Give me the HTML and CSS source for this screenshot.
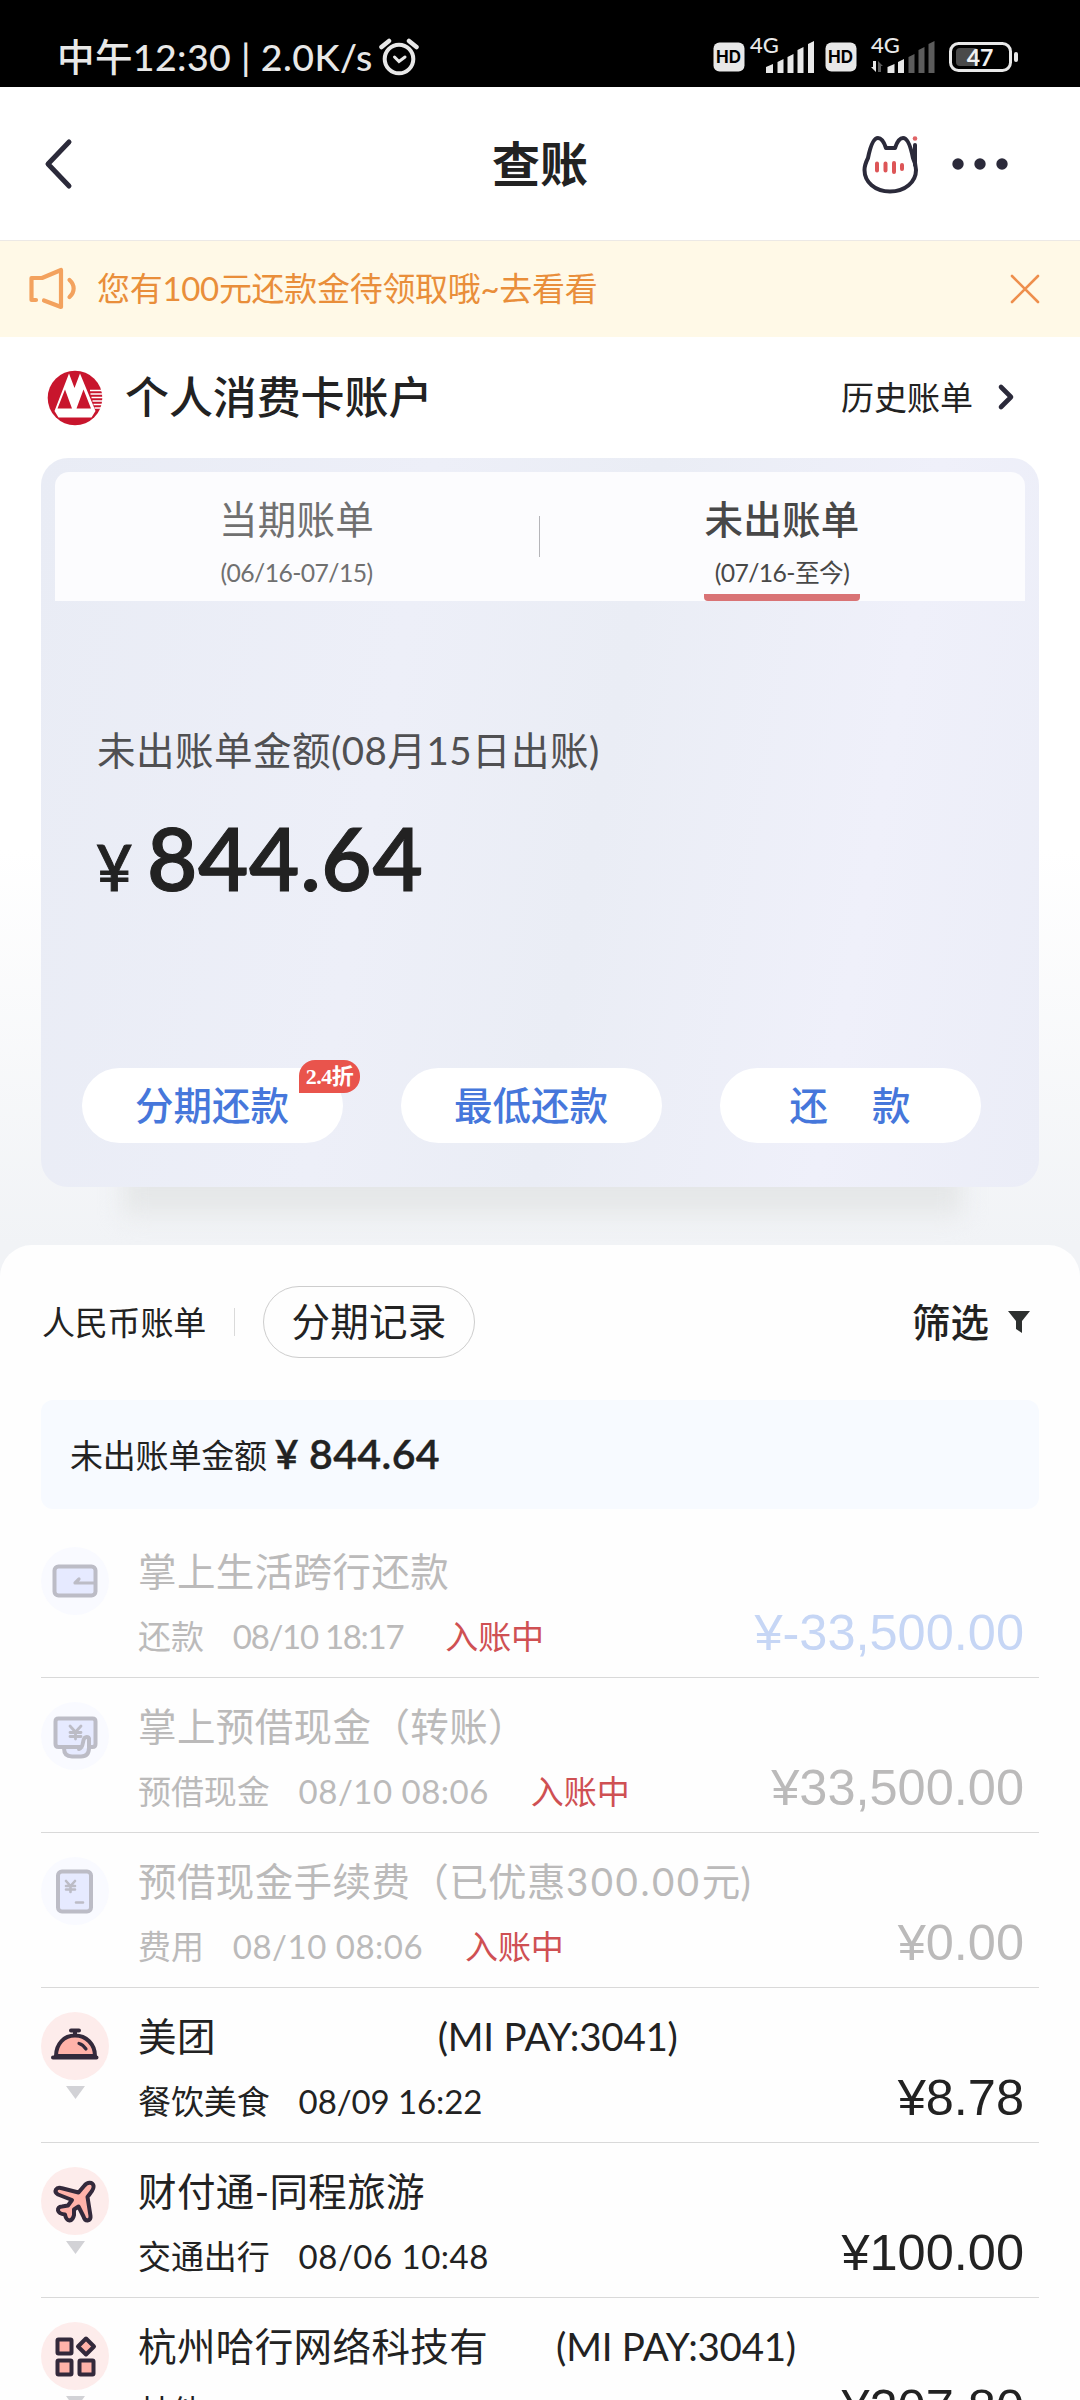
FILE: index.html
```
<!DOCTYPE html>
<html lang="zh-CN">
<head>
<meta charset="utf-8">
<title>查账</title>
<link rel="stylesheet" href="styles.css">
</head>
<body>
<div class="screen">
  <header class="status">
    <div class="status-left"><span class="clock">中午12:30 | 2.0K/s</span>
      <svg class="alarm" width="40" height="38" viewBox="0 0 40 38" fill="none" stroke="#e8e8e8" stroke-linecap="round"><circle cx="20" cy="21" r="14.3" stroke-width="4"/><path d="M2.5 9 10 3M37.500 9 30 3" stroke-width="4.500"/><path d="m15.500 19 4.500 4.500L26 19" stroke-width="3"/></svg>
    </div>
    <svg class="status-right" width="310" height="60" viewBox="712 26 310 60">
      <g fill="#e8e8e8">
        <rect x="713.500" y="42.500" width="31" height="29" rx="6"/><rect x="825.500" y="42.500" width="31" height="29" rx="6"/>
        <path d="M766 67l7-3v9h-7zM777.500 62l6-3v14h-6zM787.500 57l6-3v19h-6zM797.500 50l6-3v26h-6zM808 44l6-3v32h-6z"/>
        <path d="M887.500 67l7-3v9h-7zM898 62l6-3v14h-6zM873 61h3v11l-5-5h2z"/>
      </g>
      <path fill="#5c5c5c" d="M908.500 57l6-3v19h-6zM918.500 50l6-3v26h-6zM928.500 44l6-3v32h-6zM878 61l5 5h-2v6h-3z"/>
      <g class="sb-hd"><text x="716" y="63">HD</text><text x="828" y="63">HD</text></g>
      <g class="sb-net"><text x="750" y="53">4G</text><text x="871" y="53">4G</text></g>
      <rect x="950.500" y="43.500" width="60" height="27" rx="8" fill="none" stroke="#e8e8e8" stroke-width="3"/>
      <rect x="956" y="48" width="22" height="18" rx="4" fill="#4a4a4a"/>
      <rect x="1014" y="52" width="4" height="10" rx="2" fill="#e8e8e8"/>
      <text class="sb-bat" x="980" y="66">47</text>
    </svg>
  </header>

  <nav class="nav">
    <svg class="back" width="32" height="54" viewBox="0 0 32 54" fill="none" stroke="#2b2a3a" stroke-width="5" stroke-linecap="round" stroke-linejoin="round"><path d="M26 5 5 27l21 22"/></svg>
    <h1>查账</h1>
    <div class="nav-actions">
      <svg width="60" height="62" viewBox="862 134 60 62" fill="none" stroke-linecap="round" stroke-linejoin="round">
        <path stroke="#2b2a3a" stroke-width="4" d="M869 159c2-10 5-20 10-20 4 0 6 4 8 10h9c2-6 4-10 8-10 5 0 8 10 10 20 2 4 3 8 3 12 0 12-11 21.500-26 21.500S865.500 183 865.500 171c0-4 1.500-8 3.500-12z"/>
        <path stroke="#2b2a3a" stroke-width="4" d="M916 146v20"/><circle cx="916" cy="139.500" r="2.300" fill="#e06466"/>
        <path stroke="#dd5557" stroke-width="4" d="M878 164.500v7M886.500 164.500v7M895 164v9M903 166v4"/>
      </svg>
      <svg width="56" height="14" viewBox="0 0 56 14" fill="#2b2a3a"><circle cx="6" cy="7" r="5.700"/><circle cx="28" cy="7" r="5.700"/><circle cx="50" cy="7" r="5.700"/></svg>
    </div>
  </nav>

  <div class="notice">
    <svg class="horn" width="50" height="44" viewBox="28 267 50 44" fill="none" stroke="#f3a25e" stroke-width="4.200" stroke-linejoin="round" stroke-linecap="round"><path d="M36 300h-4.500v-22H42l19-8v37l-17-6.500M69.500 280c5.500 5 5.500 12 0 17"/></svg>
    <span class="notice-text">您有100元还款金待领取哦~去看看</span>
    <svg width="30" height="30" viewBox="0 0 30 30" fill="none" stroke="#ee8f4d" stroke-width="2.600" stroke-linecap="round"><path d="m2 2 26 26M28 2 2 28"/></svg>
  </div>

  <section class="account">
    <svg class="logo" width="56" height="56" viewBox="0 0 56 56">
      <circle cx="28" cy="28" r="27.300" fill="#c8152d"/>
      <path fill="#fff" d="M22 3.500 27.500 18 33 3.500 48.500 41l-4 6.500H11.500L7.500 41z"/>
      <path fill="#c8152d" d="M18 19.500 10.500 38.500H25zM36.500 19.500 29.500 38.500H44z"/>
      <path stroke="#fff" stroke-width="1.500" d="M43 20.500h12M43.500 24h12M44.500 27.500h12M45.500 31h11M46.500 34.500h9M47.500 38h7"/>
    </svg>
    <h2>个人消费卡账户</h2>
    <a class="history">历史账单
      <svg width="20" height="30" viewBox="0 0 20 30" fill="none" stroke="#2b2a3a" stroke-width="4.600" stroke-linecap="round" stroke-linejoin="round"><path d="m5 5 10 10L5 25"/></svg></a>
  </section>

  <section class="card">
    <div class="tabs">
      <div class="tab"><b>当期账单</b><small>(06/16-07/15)</small></div>
      <i class="tab-line"></i>
      <div class="tab active"><b>未出账单</b><small class="now">(07/16-至今)</small></div>
    </div>
    <p class="label">未出账单金额(08月15日出账)</p>
    <p class="amount"><span>¥</span>844.64</p>
    <div class="buttons">
      <button>分期还款<em>2.4折</em></button>
      <button>最低还款</button>
      <button class="pay"><span>还</span><span>款</span></button>
    </div>
  </section>

  <main class="sheet">
    <div class="tools">
      <span class="rmb">人民币账单</span><i></i><span class="pill">分期记录</span>
      <span class="filter">筛选<svg width="24" height="24" viewBox="0 0 24 24" fill="#2d302f"><path d="M1 1h22l-8 10v12l-6-4v-8z"/></svg></span>
    </div>
    <div class="summary">未出账单金额<span class="sum-yen">¥</span><span class="sum-num">844.64</span></div>

    <ul class="list">
      <li class="pending">
        <div class="ico"><svg width="68" height="68" viewBox="0 0 68 68" fill="#e6eaff" stroke="#bcbcc6" stroke-width="4" stroke-linecap="round" stroke-linejoin="round"><circle cx="34" cy="34" r="34" fill="#f9faff" stroke="none"/><rect x="13.500" y="19.500" width="41" height="29" rx="4"/><path fill="none" stroke-width="3.200" d="M53 36H34l4-4"/></svg></div>
        <div class="txt"><h3>掌上生活跨行还款</h3><p>还款<time class="tight">08/10 18:17</time><em>入账中</em></p></div>
        <strong class="blue">¥-33,500.00</strong>
      </li>
      <li class="pending">
        <div class="ico"><svg width="68" height="68" viewBox="0 0 68 68" fill="#e6eaff" stroke="#bcbcc6" stroke-width="4" stroke-linecap="round" stroke-linejoin="round"><circle cx="34" cy="34" r="34" fill="#f9faff" stroke="none"/><path d="M23 46c0 6 3 8.500 8 8.500h9c6 0 8-4 8-9"/><path d="M41 45H17.500q-3 0-3-3V19.500q0-3 3-3h34q3 0 3 3V42q0 3-3 3H48"/><path fill="none" stroke-width="2.800" d="m29 24 5.500 6 5.500-6M34.500 30v7M29 30.500h11M29 34.500h11"/><path d="M38 47c5-1 3-8 5.500-11 2-2 5-1 4.500 2v8" fill="#eef0ff"/></svg></div>
        <div class="txt"><h3>掌上预借现金（转账）</h3><p>预借现金<time class="wide">08/10 08:06</time><em>入账中</em></p></div>
        <strong>¥33,500.00</strong>
      </li>
      <li class="pending">
        <div class="ico"><svg width="68" height="68" viewBox="0 0 68 68" fill="#e6eaff" stroke="#bcbcc6" stroke-width="4" stroke-linecap="round" stroke-linejoin="round"><circle cx="34" cy="34" r="34" fill="#f9faff" stroke="none"/><rect x="17" y="14.500" width="33" height="40" rx="4"/><path fill="none" stroke-width="2.600" d="m25 24 4.500 5 4.500-5M29.500 29v6M25 29h9M25 32.500h9M35 45.500h7"/></svg></div>
        <div class="txt"><h3>预借现金手续费（已优惠<span class="num">300.00</span>元)</h3><p>费用<time class="wide">08/10 08:06</time><em>入账中</em></p></div>
        <strong>¥0.00</strong>
      </li>
      <li>
        <div class="ico"><svg width="68" height="68" viewBox="0 0 68 68" fill="#ffb2a9" stroke="#33293b" stroke-width="4" stroke-linecap="round" stroke-linejoin="round"><circle cx="34" cy="34" r="34" fill="#fdeceb" stroke="none"/><path d="M15 44c0-12 8-20.500 19-20.500S54 32 54 44z"/><path d="M12 45.500h43.500M30 18.500h8M34 19v4"/><path fill="none" stroke-width="3.200" d="M38 31.500q4 1 7 5.500"/></svg><i class="more"></i></div>
        <div class="txt"><h3>美团<span class="mi mi-far">(MI PAY:3041)</span></h3><p>餐饮美食<time>08/09 16:22</time></p></div>
        <strong>¥8.78</strong>
      </li>
      <li>
        <div class="ico"><svg width="68" height="68" viewBox="0 0 68 68" fill="#ffb2a9" stroke="#33293b" stroke-width="4" stroke-linecap="round" stroke-linejoin="round"><circle cx="34" cy="34" r="34" fill="#fdeceb" stroke="none"/><path d="M37.500 25.500 43.500 18.500c3-4 8-3.500 9 0 .5 2.500-.5 4.500-3 7.500l-3 4 3 19q.5 4-3 4.500-3 0-4-4l-5-10-4.500 3v5.500q-1 5-4.500 5.500-3.500-.5-4.500-6-6-.5-7-4-.5-3.500 4-4l6-1 4-5.500-14-5.500q-3.500-2-2-5 1.500-2.500 5-1.500z"/></svg><i class="more"></i></div>
        <div class="txt"><h3>财付通-同程旅游</h3><p>交通出行<time class="wide">08/06 10:48</time></p></div>
        <strong>¥100.00</strong>
      </li>
      <li>
        <div class="ico"><svg width="68" height="68" viewBox="0 0 68 68" fill="#ffb2a9" stroke="#33293b" stroke-width="4" stroke-linejoin="round"><circle cx="34" cy="34" r="34" fill="#fdeceb" stroke="none"/><rect x="16.500" y="17.500" width="14" height="14" rx="1"/><rect x="16.500" y="38.500" width="14" height="14" rx="1"/><rect x="38.500" y="38.500" width="14" height="14" rx="1"/><path d="m45 16.500 8 8-8 8-8-8z"/></svg><i class="more"></i></div>
        <div class="txt"><h3>杭州哈行网络科技有<span class="mi mi-near">(MI PAY:3041)</span></h3><p>其他</p></div>
        <strong>¥207.80</strong>
      </li>
    </ul>
  </main>
</div>
</body>
</html>
```
FILE: styles.css
```
* { box-sizing: border-box; margin: 0; padding: 0; }
body { width: 1080px; height: 2400px; overflow: hidden; background: #fff; color: #222; font-family: Lato, "Noto Sans CJK SC", sans-serif; font-size: 33px; }
svg { display: block; flex: none; }
i, em { font-style: normal; }
.screen { position: relative; z-index: 0; height: 2400px; overflow: hidden; background: linear-gradient(#fff 850px, #f1f3f6 1245px); }

.status { height: 87px; background: #000; color: #e8e8e8; display: flex; justify-content: space-between; padding: 26px 58px 0 57px; }
.status-left { display: flex; height: 62px; align-items: center; }
.clock { font-size: 37.5px; font-weight: 500; white-space: nowrap; line-height: 42px; letter-spacing: .4px; }
.alarm { margin-left: 6px; }
.sb-hd { font: 700 17px Inter, sans-serif; fill: #000; }
.sb-net { font: 500 22px Lato, sans-serif; fill: #e8e8e8; }
.sb-bat { font: 700 23px Lato, sans-serif; fill: #f2f2f2; text-anchor: middle; }

.nav { height: 154px; background: #fff; border-bottom: 1px solid #ece9e6; display: grid; grid-template-columns: 1fr auto 1fr; align-items: center; padding: 0 43px; }
.nav h1 { font-size: 48px; font-weight: 600; line-height: 60px; }
.nav-actions { justify-self: end; display: flex; align-items: center; gap: 31px; margin-right: 29px; }

.notice { height: 96px; background: #fff9e7; display: flex; align-items: center; padding: 0 40px 0 28px; color: #e98e3a; }
.notice-text { margin-left: 19px; flex: 1; line-height: 40px; padding-bottom: 2px; letter-spacing: -.3px; }

.account { height: 121px; display: flex; align-items: center; padding: 0 64px 0 47px; }
.account h2 { font-size: 44px; font-weight: 500; margin-left: 22px; flex: 1; line-height: 60px; padding-bottom: 2px; letter-spacing: -.1px; }
.history { display: flex; align-items: center; gap: 23px; line-height: 40px; padding-bottom: 2px; }

.card { position: relative; width: 998px; height: 729px; margin: 0 auto; border-radius: 27px; background: linear-gradient(100deg, #e9ecf5, #edeff8 35%, #eaedf5 55%, #eff0fa 80%, #ebedf7); padding: 14px 14px 0; }
.card::before { content: ""; position: absolute; z-index: -1; left: 82px; right: 76px; bottom: -28px; height: 60px; background: #e5e7e8; filter: blur(12px); }
.tabs { height: 129px; border-radius: 14px 14px 0 0; background: #fcfcfe; display: grid; grid-template-columns: 1fr 1px 1fr; justify-items: center; align-items: center; color: #707070; padding-right: 1px; }
.tab { height: 129px; padding-top: 19px; display: flex; flex-direction: column; align-items: center; }
.tab:first-child { padding-right: 1px; }
.tab b { font-size: 38.500px; font-weight: 400; line-height: 56px; letter-spacing: .2px; }
.tab small { font-size: 24.750px; line-height: 52px; letter-spacing: -.6px; }
.tab.active { color: #484848; width: 156px; border-bottom: 7px solid #d97375; border-radius: 0 0 4px 4px; }
.tab.active b { font-weight: 500; }
.tab-line { width: 1px; height: 41px; background: #b5b5b9; }
.label { margin: 119px 0 0 42px; font-size: 38.500px; line-height: 60px; color: #505052; letter-spacing: .5px; }
.amount { margin: 18px 0 0 41px; font-size: 87px; font-weight: 600; -webkit-text-stroke: 1px #222; line-height: 120px; display: flex; align-items: baseline; color: #222; letter-spacing: .6px; }
.amount span { font-size: 63px; font-weight: 500; width: 51px; }
.buttons { position: absolute; left: 41px; right: 58px; top: 610px; display: flex; justify-content: space-between; }
.buttons button { position: relative; width: 261px; height: 75px; border: 0; border-radius: 38px; background: #fff; color: #4677db; font: 500 38.500px "Noto Sans CJK SC", sans-serif; padding: 0 1px 5px 0; }
.buttons em { position: absolute; left: 217px; top: -8px; width: 61px; height: 33px; border-radius: 16px 16px 16px 0; background: #e9544c; color: #fff; font: 700 22px/33px "Liberation Serif", "Noto Sans CJK SC", serif; text-align: center; letter-spacing: -.5px; }
.pay { display: flex; justify-content: center; align-items: center; gap: 44px; }

.sheet { margin-top: 58px; height: 1155px; border-radius: 32px 32px 0 0; background: #fefefe; padding: 41px 41px 0; }
.tools { height: 72px; display: flex; align-items: center; }
.rmb { margin-left: 1px; padding-bottom: 2px; letter-spacing: -.2px; }
.tools > i { width: 1px; height: 28px; background: #dadada; margin: 0 28px; }
.pill { width: 212px; height: 72px; border: 1px solid #cdcdcd; border-radius: 36px; font-size: 38.500px; line-height: 68px; text-align: center; letter-spacing: .3px; }
.filter { margin-left: auto; margin-right: 8px; display: flex; align-items: center; gap: 18px; font-size: 38.500px; font-weight: 500; line-height: 70px; }
.summary { margin-top: 42px; height: 109px; border-radius: 12px; background: #f7faff; padding: 0 28px 2px 29px; display: flex; align-items: center; letter-spacing: -.2px; }
.sum-yen, .sum-num { font-size: 41px; font-weight: 600; letter-spacing: .4px; -webkit-text-stroke: .4px #222; }
.sum-yen { margin-left: 8px; }
.sum-num { margin-left: 10px; }

.list { list-style: none; margin-top: 14px; }
.list li { height: 155px; border-bottom: 1px solid #d9d9d9; display: flex; position: relative; }
.ico { width: 97px; padding: 24px 0 0; }
.more { display: block; margin: 6px 0 0 25px; width: 19px; height: 13px; background: #d2d2d6; clip-path: polygon(0 0, 100% 0, 50% 100%); }
.txt { flex: 1; white-space: nowrap; }
.txt h3 { font-size: 38.500px; font-weight: 400; line-height: 60px; padding-top: 18px; display: flex; letter-spacing: .4px; }
.txt p { line-height: 50px; margin-top: 10px; display: flex; letter-spacing: -.1px; }
.txt time { margin-left: 29px; }
.txt time.tight { letter-spacing: -1.300px; }
.txt time.wide { letter-spacing: .5px; }
.txt em { margin-left: 42px; color: #cf5053; }
.num { letter-spacing: 2.500px; }
.mi { letter-spacing: -.25px; }
.mi-far { margin-left: 222px; }
.mi-near { margin-left: 68px; }
.list strong { position: absolute; right: 15px; top: 80px; font: 400 50.500px/60px "Liberation Sans", sans-serif; }
.pending { color: #bbbaba; }
.pending .blue { color: #c6d6f5; }
```
